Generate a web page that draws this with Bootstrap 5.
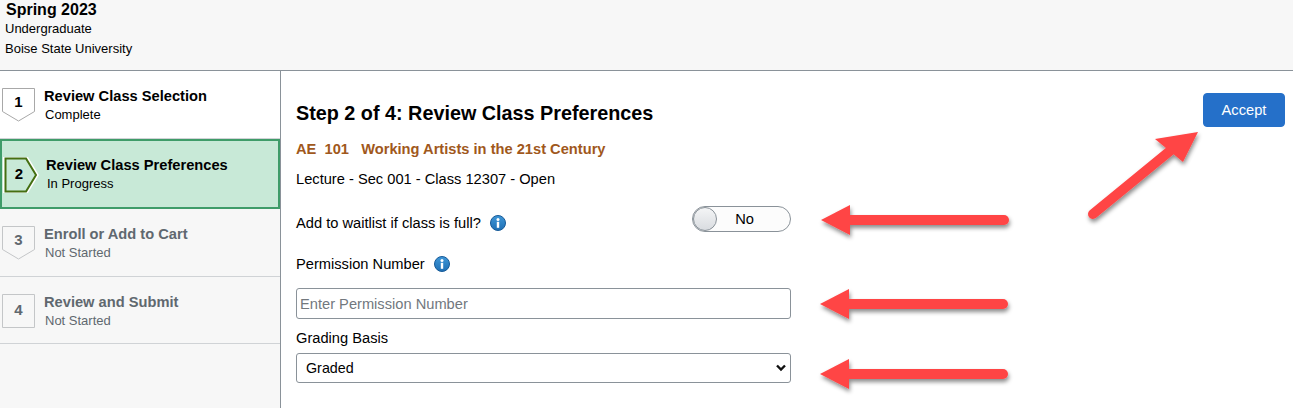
<!DOCTYPE html>
<html lang="en">
<head>
    <meta charset="UTF-8">
    <title>Review Class Preferences</title>
    <link href="https://cdn.jsdelivr.net/npm/bootstrap@5.3.3/dist/css/bootstrap.min.css" rel="stylesheet">
    <style>
        html, body { height: 100%; overflow: hidden; }
        body { font-family: "Liberation Sans", Arial, sans-serif; font-size: 14.67px; color: #000; position: relative; }
        .term-head { height: 71px; background: #f7f7f7; border-bottom: 1px solid #8a9299; padding: 1px 5px; font-size: 13px; }
        .term-title { font-size: 16px; font-weight: 700; line-height: 18px; margin-left: 1px; }
        .term-line { line-height: 19px; }
        .term-line + .term-line { margin-top: 1px; }
        .page-body { height: 337px; }
        .step-side { width: 281px; flex: none; background: #f7f7f7; border-right: 1px solid #8a9299; }
        .step-item { display: flex; border-bottom: 1px solid #d0d3d6; padding-left: 2px; height: 68px; padding-top: 17px; }
        .step-item.is-done { background: #fff; }
        .step-item.is-active { background: #c8e9d7; border: 2px solid #3f9c69; height: 70px; padding-left: 1px; padding-top: 16px; }
        .step-item.is-off { color: #60686f; }
        .step-item.is-last { height: 67px; }
        .step-shape { width: 34px; height: 34px; flex: none; margin-right: 8px; }
        .step-shape.is-current { width: 38px; height: 36px; margin-right: 5px; }
        .step-name { font-size: 14.67px; font-weight: 700; line-height: 17px; }
        .step-state { font-size: 13px; line-height: 20px; margin-left: 1px; }
        .step-num { font: 700 15px "Liberation Sans", Arial, sans-serif; }
        .main-pane { flex: 1; padding: 0 8px 0 15px; }
        .step-heading { font-size: 19.8px; font-weight: 700; line-height: 24px; margin: 30px 0 0; }
        .accept-btn { width: 82px; height: 34px; margin-top: 22px; background: #2570c9; border: 1px solid #2570c9; color: #fff; font-size: 14.67px; padding: 0; border-radius: 4px; }
        .class-title { color: #a0581c; font-weight: 700; font-size: 14.67px; line-height: 17px; margin-top: 14px; white-space: pre; }
        .class-meta { line-height: 17px; margin-top: 13px; }
        .form-pane { width: 495px; }
        .wait-row { height: 26px; margin-top: 18px; }
        .wait-label { margin-top: 9px; line-height: 17px; }
        .info-dot { width: 16px; height: 16px; margin-left: 5px; vertical-align: -3px; }
        .no-toggle { width: 99px; height: 26px; border: 1px solid #8a9299; border-radius: 13px; background: #fcfcfc; position: relative; text-align: center; line-height: 24px; padding-left: 6px; }
        .no-knob { position: absolute; left: 0; top: 0; width: 24px; height: 24px; border-radius: 50%; border: 1px solid #8a9299; background: linear-gradient(#f4f5f6, #d9dce0); }
        .perm-label { line-height: 17px; margin-top: 24px; }
        .perm-input.form-control { height: 31px; margin-top: 15px; padding: 0 3px; font-size: 14.67px; border: 1px solid #8a9299; border-radius: 3px; }
        .perm-input::placeholder { color: #72787e; }
        .grade-label { line-height: 17px; margin-top: 11px; }
        .grade-select.form-select { height: 30px; margin-top: 6px; padding: 2px 24px 0 9px; font-size: 14.3px; color: #000; border: 1px solid #8a9299; border-radius: 3px; background-size: 10px 8px; background-position: right 4px center; background-image: url("data:image/svg+xml,%3csvg xmlns='http://www.w3.org/2000/svg' viewBox='0 0 10 8'%3e%3cpath fill='none' stroke='%23111' stroke-width='2.4' d='M1 1.500l4 4 4-4'/%3e%3c/svg%3e"); }
        .arrow-layer { position: absolute; left: 0; top: 0; pointer-events: none; }
    </style>
</head>
<body>
<header class="term-head">
    <div class="term-title">Spring 2023</div>
    <div class="term-line">Undergraduate</div>
    <div class="term-line">Boise State University</div>
</header>

<div class="page-body d-flex">
    <!-- Steps -->
    <nav class="step-side">
        <div class="step-item is-done">
            <svg class="step-shape" viewBox="0 0 34 34"><path d="M.5.5h32v23l-16 9.500-16-9.500z" fill="#fff" stroke="#a8a8a8"/><text x="16.500" y="19" text-anchor="middle" class="step-num" fill="#000">1</text></svg>
            <div>
                <div class="step-name">Review Class Selection</div>
                <div class="step-state">Complete</div>
            </div>
        </div>
        <div class="step-item is-active">
            <svg class="step-shape is-current" viewBox="0 0 38 36"><path d="M2.500 1.500H23L33 18 23 34.500H2.500z" fill="#c8e9d7" stroke="#fff" stroke-width="5"/><path d="M2.500 1.500H23L33 18 23 34.500H2.500z" fill="#c8e9d7" stroke="#456f12" stroke-width="2"/><text x="16" y="22" text-anchor="middle" class="step-num" fill="#000">2</text></svg>
            <div>
                <div class="step-name">Review Class Preferences</div>
                <div class="step-state">In Progress</div>
            </div>
        </div>
        <div class="step-item is-off">
            <svg class="step-shape" viewBox="0 0 34 34"><path d="M.5.5h32v23l-16 9.500-16-9.500z" fill="#f7f7f7" stroke="#c4c6c8"/><text x="16.500" y="19" text-anchor="middle" class="step-num" fill="#60686f">3</text></svg>
            <div>
                <div class="step-name">Enroll or Add to Cart</div>
                <div class="step-state">Not Started</div>
            </div>
        </div>
        <div class="step-item is-off is-last">
            <svg class="step-shape" viewBox="0 0 34 34"><path d="M.5.5h32v33H.5z" fill="#f7f7f7" stroke="#c4c6c8"/><text x="16.500" y="21" text-anchor="middle" class="step-num" fill="#60686f">4</text></svg>
            <div>
                <div class="step-name">Review and Submit</div>
                <div class="step-state">Not Started</div>
            </div>
        </div>
    </nav>

    <!-- Step content -->
    <main class="main-pane">
        <div class="d-flex justify-content-between align-items-start">
            <h1 class="step-heading">Step 2 of 4: Review Class Preferences</h1>
            <button type="button" class="btn accept-btn">Accept</button>
        </div>
        <div class="class-title">AE  101   Working Artists in the 21st Century</div>
        <div class="class-meta">Lecture - Sec 001 - Class 12307 - Open</div>
        <div class="form-pane">
            <div class="wait-row d-flex justify-content-between">
                <div class="wait-label">Add to waitlist if class is full?
                    <svg class="info-dot" viewBox="0 0 16 16"><defs><linearGradient id="infoFill" x1="0" y1="0" x2="0" y2="1"><stop offset="0" stop-color="#3f97d8"/><stop offset="1" stop-color="#1f6fb4"/></linearGradient></defs><circle cx="8" cy="8" r="7.500" fill="url(#infoFill)" stroke="#175a98"/><circle cx="8" cy="4.500" r="1.500" fill="#fff"/><rect x="6.800" y="6.800" width="2.400" height="6" fill="#fff"/></svg>
                </div>
                <div class="no-toggle"><span class="no-knob"></span>No</div>
            </div>
            <div class="perm-label">Permission Number
                <svg class="info-dot" viewBox="0 0 16 16"><circle cx="8" cy="8" r="7.500" fill="url(#infoFill)" stroke="#175a98"/><circle cx="8" cy="4.500" r="1.500" fill="#fff"/><rect x="6.800" y="6.800" width="2.400" height="6" fill="#fff"/></svg>
            </div>
            <input type="text" class="form-control perm-input" placeholder="Enter Permission Number">
            <div class="grade-label">Grading Basis</div>
            <select class="form-select grade-select">
                <option>Graded</option>
            </select>
        </div>
    </main>
</div>

<!-- Red callout arrows drawn over the page -->
<svg class="arrow-layer" width="1293" height="408" viewBox="0 0 1293 408">
    <defs>
        <filter id="arrowShadow" x="-20%" y="-40%" width="140%" height="200%">
            <feDropShadow dx="1" dy="3" stdDeviation="2" flood-color="#000" flood-opacity=".45"/>
        </filter>
    </defs>
    <g fill="#ff4545" stroke="#ff4545" stroke-linecap="round" filter="url(#arrowShadow)">
        <path d="M850 220H1004" stroke-width="10"/>
        <path d="M821 220l29-15v30z" stroke="none"/>
        <path d="M849 304H1003" stroke-width="10"/>
        <path d="M820 304l29-15v30z" stroke="none"/>
        <path d="M849 374H1003" stroke-width="10"/>
        <path d="M820 374l29-15v30z" stroke="none"/>
        <path d="M1093 214L1176 146" stroke-width="10"/>
        <path d="M1198 132l-43 7 28 23z" stroke="none"/>
    </g>
</svg>
</body>
</html>
